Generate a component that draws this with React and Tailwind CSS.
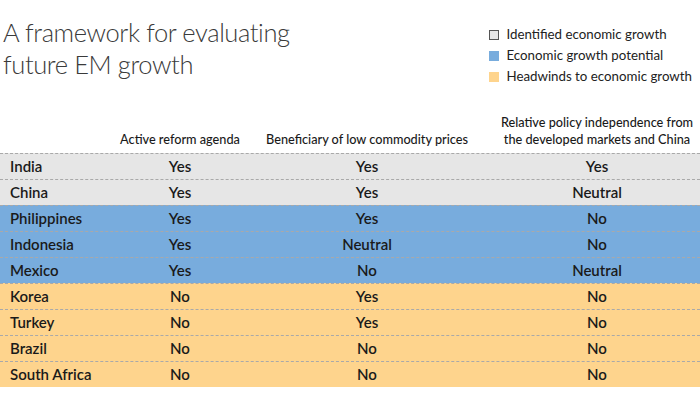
import React from "react";

const rows = [
  ["India", "Yes", "Yes", "Yes", "g"],
  ["China", "Yes", "Yes", "Neutral", "g"],
  ["Philippines", "Yes", "Yes", "No", "b"],
  ["Indonesia", "Yes", "Neutral", "No", "b"],
  ["Mexico", "Yes", "No", "Neutral", "b"],
  ["Korea", "No", "Yes", "No", "o"],
  ["Turkey", "No", "Yes", "No", "o"],
  ["Brazil", "No", "No", "No", "o"],
  ["South Africa", "No", "No", "No", "o"],
];

const bg = { g: "bg-[#e6e6e6]", b: "bg-[#78acdd]", o: "bg-[#fed48d]" };

export default function App() {
  return (
    <div
      className="w-[700px] h-[400px] bg-white text-[#1a1a1a] overflow-hidden"
      style={{ fontFamily: "Lato, 'Open Sans', sans-serif" }}
    >
      <div className="flex justify-between h-[114px]">
        <div className="pl-[3px] pt-[16px] text-[25.5px] leading-[32px] font-light tracking-[-0.4px] text-[#3a3a3a]">
          <div>A framework for evaluating</div>
          <div>future EM growth</div>
        </div>
        <div className="pt-[26px] pr-[8px] flex flex-col gap-[4px] text-[13.3px] leading-[17px] text-[#222]">
          <div className="flex items-center gap-[7px]">
            <span className="w-[10px] h-[10px] bg-[#e6e6e6] border border-[#555]" />
            Identified economic growth
          </div>
          <div className="flex items-center gap-[7px]">
            <span className="w-[10px] h-[10px] bg-[#78acdd]" />
            Economic growth potential
          </div>
          <div className="flex items-center gap-[7px]">
            <span className="w-[10px] h-[10px] bg-[#fed48d]" />
            Headwinds to economic growth
          </div>
        </div>
      </div>
      <div className="grid grid-cols-[120px_120px_254px_206px] h-[39px] items-end pb-[7px] text-[12.7px] leading-[17px] font-medium text-center">
        <div />
        <div>Active reform agenda</div>
        <div>Beneficiary of low commodity prices</div>
        <div>
          Relative policy independence from
          <br />
          the developed markets and China
        </div>
      </div>
      <div>
        {rows.map((r, i) => (
          <div
            key={i}
            className={`grid grid-cols-[120px_120px_254px_206px] h-[26px] items-center text-[15px] font-semibold border-t border-dashed border-[#a9a9a9] ${bg[r[4]]}`}
          >
            <div className="pl-[10px]">{r[0]}</div>
            <div className="text-center">{r[1]}</div>
            <div className="text-center">{r[2]}</div>
            <div className="text-center">{r[3]}</div>
          </div>
        ))}
      </div>
    </div>
  );
}
